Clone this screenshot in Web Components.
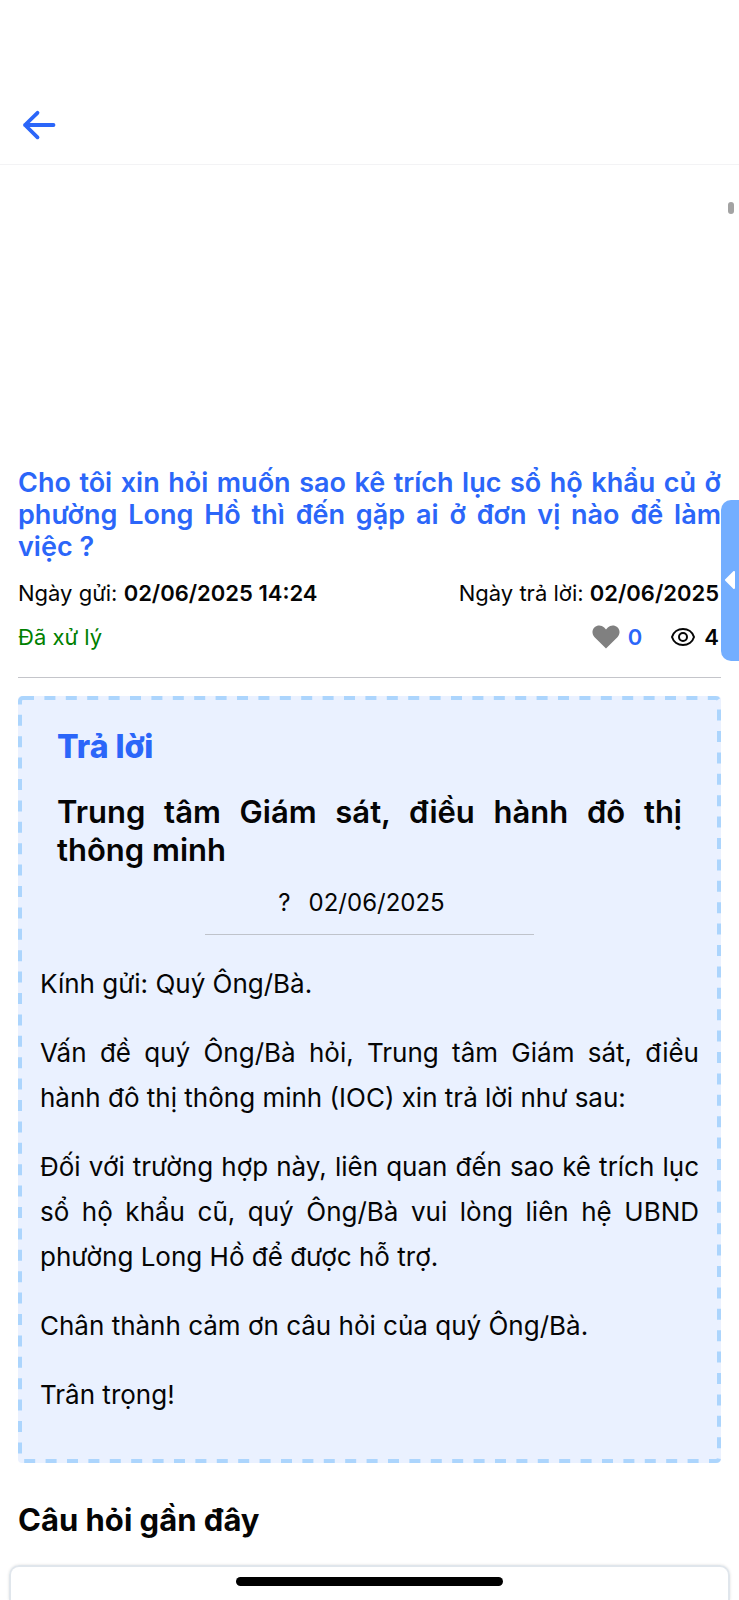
<!DOCTYPE html>
<html lang="vi">
<head>
<meta charset="utf-8">
<meta name="viewport" content="width=device-width, initial-scale=1">
<title>Hỏi đáp</title>
<style>
:root {
    --primary-color: #2b66f9;
    --text-color: #050505;
    --success-color: #008000;
    --muted-color: #808080;
    --line-color: #c4c5ca;
    --tab-color: #73aeff;
    --answer-bg: #eaf1ff;
    --answer-border: #acd5fd;
}

body {
    margin: 0;
    background: #fff;
    color: var(--text-color);
    font-family: Inter, "Noto Sans", sans-serif;
    font-size: 26px;
}
</style>
</head>
<body>
<question-page>
    <app-header slot="header"></app-header>
    <question-summary sent="02/06/2025 14:24" answered="02/06/2025" status="Đã xử lý" likes="0" views="4">Cho tôi xin hỏi muốn sao kê trích lục sổ hộ khẩu củ ở phường Long Hồ thì đến gặp ai ở đơn vị nào để làm việc ?</question-summary>
    <answer-box agency="Trung tâm Giám sát, điều hành đô thị thông minh" date="02/06/2025">
        <p>Kính gửi: Quý Ông/Bà.</p>
        <p>Vấn đề quý Ông/Bà hỏi, Trung tâm Giám sát, điều hành đô thị thông minh (IOC) xin trả lời như sau:</p>
        <p>Đối với trường hợp này, liên quan đến sao kê trích lục sổ hộ khẩu cũ, quý Ông/Bà vui lòng liên hệ UBND phường Long Hồ để được hỗ trợ.</p>
        <p>Chân thành cảm ơn câu hỏi của quý Ông/Bà.</p>
        <p>Trân trọng!</p>
    </answer-box>
    <recent-questions slot="footer">Câu hỏi gần đây</recent-questions>
    <side-tab slot="overlay"></side-tab>
    <scroll-thumb slot="overlay"></scroll-thumb>
    <home-indicator slot="overlay"></home-indicator>
</question-page>

<script>
function render(el, html) {
    const template = document.createElement('template');
    template.innerHTML = html;
    const shadow = el.attachShadow({ mode: 'open' });
    shadow.append(template.content.cloneNode(true));
    return shadow;
}


class QuestionPage extends HTMLElement {
    constructor() {
        super();
        render(this, `
<style>
:host {
    display: flex;
    flex-direction: column;
    min-height: 100vh;
}

main {
    padding: 302px 18px 0;
}
</style>
<slot name="header"></slot>
<main><slot></slot></main>
<slot name="footer"></slot>
<slot name="overlay"></slot>
`);
    }
}
customElements.define('question-page', QuestionPage);


class AppHeader extends HTMLElement {
    constructor() {
        super();
        render(this, `
<style>
:host {
    display: block;
    padding: 100px 14px 14px;
    border-bottom: 1px solid #f3f3f5;
}

button {
    display: block;
    width: 50px;
    height: 50px;
    padding: 0;
    border: 0;
    background: none;
    color: var(--primary-color);
    cursor: pointer;
}

svg {
    display: block;
}
</style>
<button type="button" aria-label="Quay lại">
    <svg width="50" height="50" viewBox="0 0 50 50" fill="none" stroke="currentColor" stroke-width="3.8" stroke-linecap="round" stroke-linejoin="round">
        <path d="M39.5 25H11M23.500 12.800L11 25l12.500 12.300"/>
    </svg>
</button>
`);
    }
}
customElements.define('app-header', AppHeader);


class QuestionSummary extends HTMLElement {
    constructor() {
        super();
        const shadow = render(this, `
<style>
:host {
    display: block;
    padding-bottom: 26px;
    border-bottom: 1px solid var(--line-color);
    font-size: 22px;
    line-height: 28px;
}

h1 {
    margin: 0 0 16px;
    color: var(--primary-color);
    font-size: 27px;
    font-weight: 600;
    line-height: 32px;
    text-align: justify;
}

.row {
    display: flex;
    justify-content: space-between;
    align-items: center;
    padding-right: 2px;
}

.row + .row {
    margin-top: 16px;
}

b {
    font-weight: 600;
}

.status {
    color: var(--success-color);
}

.stats {
    display: flex;
    align-items: center;
    gap: 28px;
}

.stat {
    display: flex;
    align-items: center;
    gap: 8px;
    padding: 0;
    border: 0;
    background: none;
    color: inherit;
    font: inherit;
    font-weight: 600;
}

button.stat {
    color: var(--primary-color);
    cursor: pointer;
}

button.stat svg {
    fill: var(--muted-color);
}
</style>
<h1><slot></slot></h1>
<div class="row">
    <span>Ngày gửi: <b id="sent"></b></span>
    <span>Ngày trả lời: <b id="answered"></b></span>
</div>
<div class="row">
    <span class="status"></span>
    <div class="stats">
        <button class="stat" type="button" aria-label="Thích">
            <svg width="28" height="24" viewBox="0 0 28 24">
                <path d="M14 23.500L2.600 12.300C-.3 9.200-.2 4.700 2.600 2.200 5.600-.4 9.700 0 12.200 2.600L14 4.400l1.800-1.800C18.300 0 22.400-.4 25.400 2.200c2.800 2.500 2.900 7 0 10.100z"/>
            </svg>
            <span id="likes"></span>
        </button>
        <span class="stat">
            <svg width="26" height="20" viewBox="0 0 26 20" fill="none" stroke="currentColor" stroke-width="2">
                <path d="M2 10C3.500 5 8 2 13 2s9.500 3 11 8c-1.500 5-6 8-11 8S3.500 15 2 10z"/>
                <circle cx="13" cy="10" r="4"/>
            </svg>
            <span id="views"></span>
        </span>
    </div>
</div>
`);
        ['sent', 'answered', 'likes', 'views'].forEach(name => {
            shadow.getElementById(name).textContent = this.getAttribute(name);
        });
        shadow.querySelector('.status').textContent = this.getAttribute('status');
    }
}
customElements.define('question-summary', QuestionSummary);


class AnswerBox extends HTMLElement {
    constructor() {
        super();
        const shadow = render(this, `
<style>
:host {
    display: block;
    position: relative;
    margin-top: 18px;
    padding: 32px 22px 22px;
    border-radius: 4px;
    background: var(--answer-bg);
    line-height: 45px;
    text-align: justify;
}

.outline {
    position: absolute;
    inset: 0;
    width: 100%;
    height: 100%;
    pointer-events: none;
}

.outline rect {
    x: 2px;
    y: 2px;
    width: calc(100% - 4px);
    height: calc(100% - 4px);
    fill: none;
    stroke: var(--answer-border);
    stroke-width: 4px;
    stroke-dasharray: 11 10.4;
}

header {
    padding: 0 17px;
}

h2, h3 {
    margin: 0;
    line-height: 38px;
}

h2 {
    color: var(--primary-color);
    font-size: 32px;
    font-weight: 800;
}

h3 {
    margin-top: 27px;
    font-size: 31px;
    font-weight: 600;
}

.date {
    display: flex;
    justify-content: center;
    gap: 18px;
    width: 50%;
    box-sizing: border-box;
    margin: 16px auto 26px;
    padding: 0 16px 13px 0;
    border-bottom: 1px solid #bfc3cb;
    font-size: 24px;
    line-height: 36px;
}

::slotted(p) {
    margin: 0 0 24px;
}
</style>
<svg class="outline" aria-hidden="true"><rect rx="3"/></svg>
<header>
    <h2>Trả lời</h2>
    <h3></h3>
</header>
<div class="date"><span>?</span><time></time></div>
<slot></slot>
`);
        shadow.querySelector('h3').textContent = this.getAttribute('agency');
        shadow.querySelector('time').textContent = this.getAttribute('date');
    }
}
customElements.define('answer-box', AnswerBox);


class RecentQuestions extends HTMLElement {
    constructor() {
        super();
        render(this, `
<style>
:host {
    display: flex;
    flex-direction: column;
    flex: 1;
    padding-top: 37px;
}

h2 {
    margin: 0 18px 25px;
    font-size: 31px;
    font-weight: 700;
    line-height: 40px;
}

.card {
    flex: 1;
    min-height: 32px;
    margin: 0 9px;
    border: 2px solid #e0e6ec;
    border-bottom: 0;
    border-radius: 10px 10px 0 0;
    box-shadow: 0 0 3px #0002;
}
</style>
<h2><slot></slot></h2>
<div class="card"></div>
`);
    }
}
customElements.define('recent-questions', RecentQuestions);


class SideTab extends HTMLElement {
    constructor() {
        super();
        render(this, `
<style>
:host {
    position: fixed;
    top: 500px;
    right: 0;
}

button {
    display: flex;
    align-items: center;
    justify-content: center;
    width: 18px;
    height: 161px;
    padding: 0;
    border: 0;
    border-radius: 10px 0 0 10px;
    background: var(--tab-color);
    cursor: pointer;
}
</style>
<button type="button" aria-label="Mở bảng bên">
    <svg width="12" height="20" viewBox="0 0 12 20" fill="#fff" stroke="#fff" stroke-width="2" stroke-linejoin="round">
        <path d="M10 1v16L2 9z"/>
    </svg>
</button>
`);
    }
}
customElements.define('side-tab', SideTab);


class ScrollThumb extends HTMLElement {
    constructor() {
        super();
        render(this, `
<style>
:host {
    position: fixed;
    top: 202px;
    right: 5px;
    width: 6px;
    height: 12px;
    border-radius: 3px;
    background: #a3a3a3;
}
</style>
`);
    }
}
customElements.define('scroll-thumb', ScrollThumb);


class HomeIndicator extends HTMLElement {
    constructor() {
        super();
        render(this, `
<style>
:host {
    position: fixed;
    bottom: 14px;
    left: 0;
    right: 0;
    width: 36%;
    height: 9px;
    margin: 0 auto;
    border-radius: 5px;
    background: #000;
}
</style>
`);
    }
}
customElements.define('home-indicator', HomeIndicator);
</script>
</body>
</html>
